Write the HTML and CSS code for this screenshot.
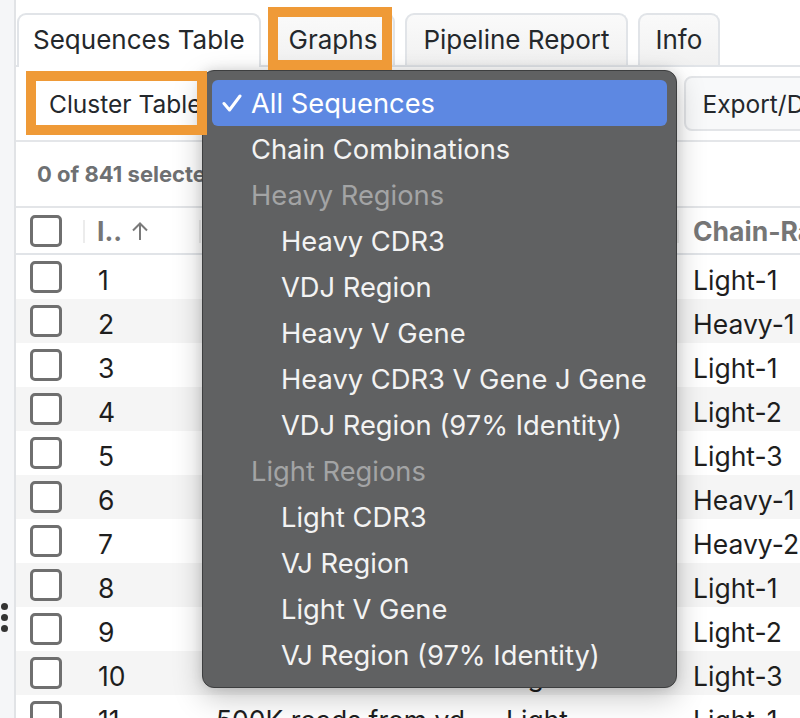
FILE: index.html
```html
<!DOCTYPE html>
<html lang="en">
<head>
<meta charset="utf-8">
<title>Sequences Table</title>
<link rel="stylesheet" href="styles.css">
</head>
<body>
<div class="app">
  <aside class="gutter">
    <div class="grip"><span></span><span></span><span></span></div>
  </aside>
  <main class="main">
    <nav class="tabs">
      <div class="tab active">Sequences Table</div>
      <div class="tab">Graphs</div>
      <div class="tab">Pipeline Report</div>
      <div class="tab">Info</div>
    </nav>
    <div class="toolbar">
      <button class="btn btn-white">Cluster Table</button>
      <button class="btn btn-select">All Sequences</button>
      <button class="btn">Export/Download</button>
    </div>
    <div class="status">0 of 841 selected</div>
    <div class="grid">
      <div class="row head">
        <div class="c c-check"><span class="box"></span></div>
        <div class="c c-id"><span class="sep"></span>I..<svg class="sort" width="20" height="20" viewBox="0 0 20 20"><path d="M10 2.5V19M3 9.5L10 2.5L17 9.5" fill="none" stroke="#7a7a7a" stroke-width="2"/></svg></div>
        <div class="c c-name"><span class="sep"></span>Sample Name</div>
        <div class="c c-chain"><span class="sep"></span>Chain</div>
        <div class="c c-rank"><span class="sep"></span>Chain-Rank</div>
      </div>
      <div class="row"><div class="c c-check"><span class="box"></span></div><div class="c c-id">1</div><div class="c c-name">500K reads from vdj_sample</div><div class="c c-chain">Light</div><div class="c c-rank">Light-1</div></div>
      <div class="row"><div class="c c-check"><span class="box"></span></div><div class="c c-id">2</div><div class="c c-name">500K reads from vdj_sample</div><div class="c c-chain">Heavy</div><div class="c c-rank">Heavy-1</div></div>
      <div class="row"><div class="c c-check"><span class="box"></span></div><div class="c c-id">3</div><div class="c c-name">500K reads from vdj_sample</div><div class="c c-chain">Light</div><div class="c c-rank">Light-1</div></div>
      <div class="row"><div class="c c-check"><span class="box"></span></div><div class="c c-id">4</div><div class="c c-name">500K reads from vdj_sample</div><div class="c c-chain">Light</div><div class="c c-rank">Light-2</div></div>
      <div class="row"><div class="c c-check"><span class="box"></span></div><div class="c c-id">5</div><div class="c c-name">500K reads from vdj_sample</div><div class="c c-chain">Light</div><div class="c c-rank">Light-3</div></div>
      <div class="row"><div class="c c-check"><span class="box"></span></div><div class="c c-id">6</div><div class="c c-name">500K reads from vdj_sample</div><div class="c c-chain">Heavy</div><div class="c c-rank">Heavy-1</div></div>
      <div class="row"><div class="c c-check"><span class="box"></span></div><div class="c c-id">7</div><div class="c c-name">500K reads from vdj_sample</div><div class="c c-chain">Heavy</div><div class="c c-rank">Heavy-2</div></div>
      <div class="row"><div class="c c-check"><span class="box"></span></div><div class="c c-id">8</div><div class="c c-name">500K reads from vdj_sample</div><div class="c c-chain">Light</div><div class="c c-rank">Light-1</div></div>
      <div class="row"><div class="c c-check"><span class="box"></span></div><div class="c c-id">9</div><div class="c c-name">500K reads from vdj_sample</div><div class="c c-chain">Light</div><div class="c c-rank">Light-2</div></div>
      <div class="row"><div class="c c-check"><span class="box"></span></div><div class="c c-id">10</div><div class="c c-name">500K reads from vdj_sample</div><div class="c c-chain">Light</div><div class="c c-rank">Light-3</div></div>
      <div class="row"><div class="c c-check"><span class="box"></span></div><div class="c c-id">11</div><div class="c c-name">500K reads from vdj_sample</div><div class="c c-chain">Light</div><div class="c c-rank">Light-1</div></div>
    </div>
  </main>
</div>

<div class="annot annot-graphs"></div>

<div class="menu">
  <div class="item selected"><svg class="check" width="20" height="18" viewBox="0 0 20 18"><path d="M2 9.5L7.5 16L18 2" fill="none" stroke="#ffffff" stroke-width="3" stroke-linecap="round" stroke-linejoin="round"/></svg>All Sequences</div>
  <div class="item">Chain Combinations</div>
  <div class="item group">Heavy Regions</div>
  <div class="item sub">Heavy CDR3</div>
  <div class="item sub">VDJ Region</div>
  <div class="item sub">Heavy V Gene</div>
  <div class="item sub">Heavy CDR3 V Gene J Gene</div>
  <div class="item sub">VDJ Region (97% Identity)</div>
  <div class="item group">Light Regions</div>
  <div class="item sub">Light CDR3</div>
  <div class="item sub">VJ Region</div>
  <div class="item sub">Light V Gene</div>
  <div class="item sub">VJ Region (97% Identity)</div>
</div>

<div class="annot annot-cluster"></div>
</body>
</html>
```

FILE: styles.css
```css
* { box-sizing: border-box; }

html, body {
  margin: 0;
  padding: 0;
  width: 800px;
  height: 718px;
  overflow: hidden;
  background: #ffffff;
  font-family: Inter, "Noto Sans", sans-serif;
  color: #212529;
}

.app {
  display: flex;
  height: 718px;
}

.gutter {
  width: 16px;
  flex: 0 0 16px;
  background: #f5f6f8;
  border-right: 2px solid #e1e3e6;
  padding-top: 603px;
}

.grip {
  display: flex;
  flex-direction: column;
  gap: 4px;
  padding-left: 1px;
}

.grip span {
  width: 7px;
  height: 7px;
  border-radius: 50%;
  background: #333;
}

.main {
  flex: 1;
  min-width: 0;
  padding-top: 13px;
  overflow: hidden;
}

/* tabs */
.tabs {
  display: flex;
  gap: 10px;
  padding-left: 1px;
  border-bottom: 2px solid #e1e4e8;
  white-space: nowrap;
}

.tab {
  height: 52px;
  padding: 0 16px 2px;
  display: flex;
  align-items: center;
  font-size: 26px;
  border: 2px solid #e1e4e8;
  border-bottom: none;
  border-radius: 9px 9px 0 0;
  background: linear-gradient(#fafafa, #f1f1f1);
  color: #24282c;
}

.tab.active {
  background: #ffffff;
  height: 54px;
  margin-bottom: -2px;
  padding: 0 14px 4px;
}

/* toolbar */
.toolbar {
  display: flex;
  gap: 8px;
  height: 75px;
  padding: 9px 0 0 15px;
  border-bottom: 2px solid #e4e6e9;
  white-space: nowrap;
}

.btn {
  height: 55px;
  padding: 0 16px;
  font-family: inherit;
  font-size: 24.5px;
  color: #24282c;
  background: #f8f9fa;
  border: 2px solid #e3e5e8;
  border-radius: 8px;
  flex: 0 0 auto;
}

.btn-white { background: #ffffff; padding-right: 12px; }

.btn-select { width: 453px; text-align: left; }

/* status */
.status {
  height: 66px;
  padding-left: 21px;
  display: flex;
  align-items: center;
  font-size: 22px;
  font-weight: 700;
  color: #6e7072;
  border-bottom: 2px solid #e3e5e8;
  white-space: nowrap;
}

/* grid */
.row {
  display: grid;
  grid-template-columns: 67px 116px 291px 187px 1fr;
  height: 44px;
  font-size: 26.5px;
  color: #1e1e1e;
  white-space: nowrap;
}

.row:nth-child(odd):not(.head) { background: #f5f5f5; }

.c {
  height: 44px;
  line-height: 44px;
  padding-top: 3px;
  overflow: hidden;
  text-overflow: ellipsis;
  position: relative;
}

.c-check {
  padding: 0 0 0 14px;
  display: flex;
  align-items: center;
}

.c-id { padding-left: 15px; }
.c-name { padding-left: 17px; padding-right: 0; }
.c-chain { padding-left: 16px; }
.c-rank { padding-left: 16px; }

.row.head {
  height: 47px;
  border-bottom: 2px solid #e1e4e8;
  font-weight: 700;
  color: #767676;
}

.head .c {
  height: 45px;
  line-height: normal;
  padding-top: 0;
  display: flex;
  align-items: center;
}

.head .c-id { padding-left: 14px; gap: 8px; }

.sep {
  position: absolute;
  left: 0;
  top: 12px;
  width: 2px;
  height: 23px;
  background: #ececec;
}

.sort { flex: 0 0 auto; margin-top: 1px; }

.box {
  width: 32px;
  height: 32px;
  border: 3px solid #6f6f6f;
  border-radius: 5px;
  background: #ffffff;
  flex: 0 0 auto;
}

/* dropdown menu */
.menu {
  position: absolute;
  left: 202px;
  top: 70px;
  width: 475px;
  padding: 9px;
  background: #606162;
  border: 1px solid #3d3e3f;
  border-radius: 12px;
  box-shadow: 0 10px 30px rgba(0, 0, 0, 0.22), 0 0 12px rgba(0, 0, 0, 0.12);
  z-index: 5;
}

.item {
  height: 46px;
  display: flex;
  align-items: center;
  padding-left: 39px;
  font-size: 27.3px;
  color: #f3f3f3;
  border-radius: 6px;
  white-space: nowrap;
}

.item.selected {
  background: #5d88e2;
  color: #ffffff;
  padding-left: 10px;
}

.check { margin-right: 9px; flex: 0 0 auto; }

.item.group { color: #a3a4a5; }

.item.sub { padding-left: 69px; }

/* annotation boxes */
.annot {
  position: absolute;
  border: 10px solid #ef9a37;
  z-index: 10;
}

.annot-graphs { left: 268px; top: 7px; width: 124px; height: 63px; }

.annot-cluster { left: 26px; top: 71px; width: 181px; height: 64px; }
```
